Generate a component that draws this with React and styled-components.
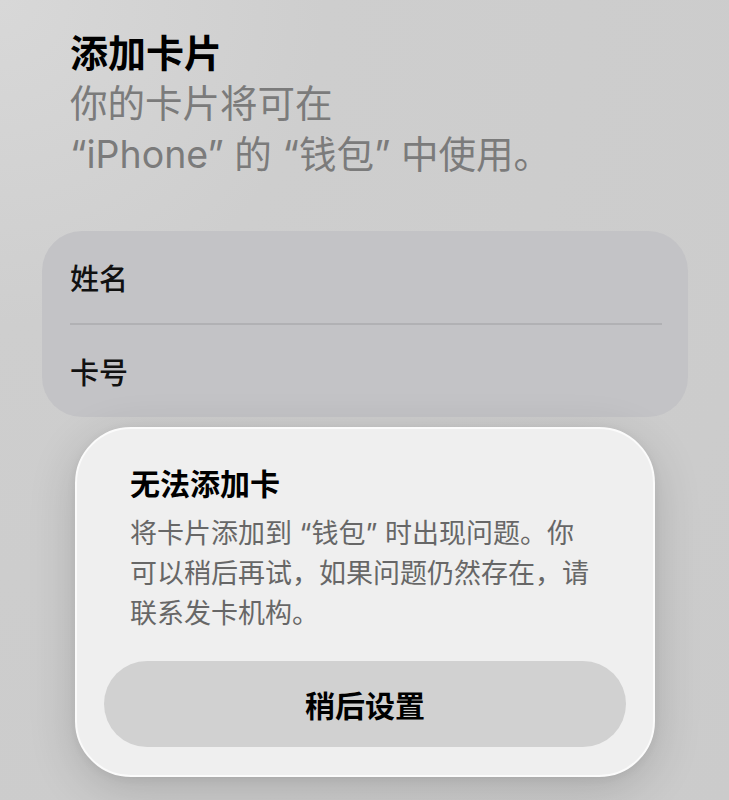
import styled, { createGlobalStyle } from "styled-components";

const GlobalStyle = createGlobalStyle`
  html, body {
    margin: 0;
    padding: 0;
  }
  body {
    background: radial-gradient(circle at 0% 0%, #d8d8d8 0%, #cecece 30%, #cbcbcb 100%);
    min-height: 800px;
    font-family: "Inter", "Noto Sans CJK SC", sans-serif;
    -webkit-font-smoothing: antialiased;
  }
`;

const Page = styled.div`
  width: 729px;
  height: 800px;
  box-sizing: border-box;
  padding: 28px 41px 0 42px;
  display: flex;
  flex-direction: column;
  overflow: hidden;
`;

const Header = styled.header`
  padding-left: 28px;
`;

const Title = styled.h1`
  margin: 0;
  font-size: 38px;
  line-height: 50px;
  font-weight: 700;
  color: #000;
`;

const Subtitle = styled.p`
  margin: 0;
  font-size: 37.5px;
  line-height: 51px;
  font-weight: 400;
  color: #7b7b7b;
`;

const FormCard = styled.div`
  margin-top: 51px;
  background: #c3c3c6;
  border-radius: 40px;
  display: flex;
  flex-direction: column;
`;

const FieldRow = styled.div`
  height: 92px;
  display: flex;
  align-items: center;
  padding: 0 28px;
  font-size: 29px;
  font-weight: 500;
  color: #111;
`;

const Divider = styled.div`
  height: 2px;
  margin: 0 26px 0 28px;
  background: #b1b1b4;
`;

const Alert = styled.div`
  align-self: center;
  width: 580px;
  box-sizing: border-box;
  margin-top: 10px;
  padding: 40px 27px 28px;
  background: #efefef;
  border: 2px solid #fbfbfb;
  border-radius: 56px;
  box-shadow: 0 12px 48px rgba(0, 0, 0, 0.16), 0 2px 10px rgba(0, 0, 0, 0.06);
  display: flex;
  flex-direction: column;
`;

const AlertText = styled.div`
  padding: 0 26px;
`;

const AlertTitle = styled.h2`
  margin: 0;
  font-size: 30px;
  line-height: 30px;
  font-weight: 700;
  color: #000;
`;

const AlertBody = styled.p`
  margin: 15px 0 0;
  max-width: 462px;
  font-size: 27px;
  line-height: 40px;
  color: #676767;
`;

const ActionButton = styled.button`
  margin-top: 27px;
  height: 86px;
  border: none;
  border-radius: 43px;
  background: #d1d1d1;
  font-family: inherit;
  font-size: 30px;
  font-weight: 600;
  color: #000;
`;

function App() {
  return (
    <>
      <GlobalStyle />
      <Page>
        <Header>
          <Title>添加卡片</Title>
          <Subtitle>
            你的卡片将可在
            <br />
            “iPhone” 的 “钱包” 中使用。
          </Subtitle>
        </Header>

        <FormCard>
          <FieldRow>姓名</FieldRow>
          <Divider />
          <FieldRow>卡号</FieldRow>
        </FormCard>

        <Alert role="alertdialog">
          <AlertText>
            <AlertTitle>无法添加卡</AlertTitle>
            <AlertBody>
              将卡片添加到 “钱包” 时出现问题。你可以稍后再试，如果问题仍然存在，请联系发卡机构。
            </AlertBody>
          </AlertText>
          <ActionButton>稍后设置</ActionButton>
        </Alert>
      </Page>
    </>
  );
}

export default App;
